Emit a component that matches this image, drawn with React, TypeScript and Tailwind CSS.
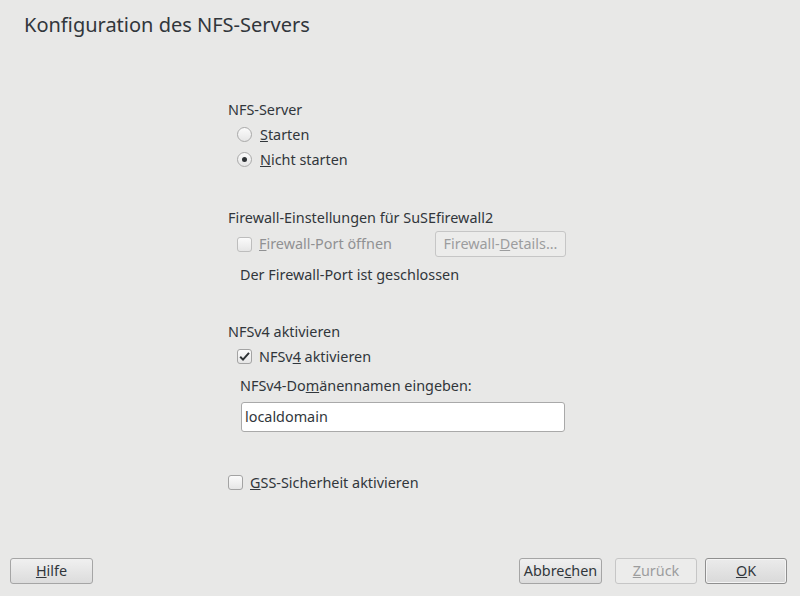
import type { ReactNode } from "react"

const font = { fontFamily: '"Noto Sans", "Open Sans", sans-serif' }

function Radio({ checked, children }: { checked?: boolean; children: ReactNode }) {
  return (
    <div className="flex h-[25px] items-center pl-[9px]">
      <span className="flex h-[15px] w-[15px] items-center justify-center rounded-full border border-[#a9a9a9] bg-gradient-to-b from-[#fbfbfb] to-[#e6e6e6]">
        {checked && <span className="h-[5px] w-[5px] rounded-full bg-[#2e3235]" />}
      </span>
      <span className="ml-[8px]">{children}</span>
    </div>
  )
}

function Check({ checked, disabled, children, indent = true }: { checked?: boolean; disabled?: boolean; children: ReactNode; indent?: boolean }) {
  return (
    <div className={"flex h-[25px] items-center " + (indent ? "pl-[9px]" : "pl-0")}>
      <span
        className={
          "flex h-[15px] w-[15px] items-center justify-center rounded-[3px] border bg-gradient-to-b from-[#fbfbfb] to-[#e6e6e6] " +
          (disabled ? "border-[#bdbdbd]" : "border-[#a3a3a3]")
        }
      >
        {checked && (
          <svg width="13" height="13" viewBox="0 0 13 13">
            <path d="M2.2 6.8 L5 9.6 L11 2.8" fill="none" stroke="#2e3235" strokeWidth="2" />
          </svg>
        )}
      </span>
      <span className={"ml-[7px] " + (disabled ? "text-[#909193]" : "")}>{children}</span>
    </div>
  )
}

function Btn({ children, disabled, def, w = "w-[83px]" }: { children: ReactNode; disabled?: boolean; def?: boolean; w?: string }) {
  return (
    <button
      className={
        "flex h-[26px] items-center justify-center rounded-[3px] border text-[14.4px] " +
        w +
        " " +
        (disabled
          ? "border-[#c6c6c6] bg-[#ececeb] text-[#9c9d9e]"
          : def
          ? "border-[#8f8f8f] bg-gradient-to-b from-[#ebebeb] to-[#d9d9d9] text-[#31363b] shadow-[inset_0_0_0_1px_#f4f4f4]"
          : "border-[#a5a5a5] bg-gradient-to-b from-[#f0f0f0] to-[#dcdcdc] text-[#31363b]")
      }
    >
      {children}
    </button>
  )
}

export default function App() {
  return (
    <div style={font} className="flex h-[596px] w-[800px] flex-col bg-[#e8e8e7] text-[14.4px] leading-[20px] text-[#31363b]">
      <h1 className="pl-[24px] pt-[12px] text-[20px] leading-[26px]">Konfiguration des NFS-Servers</h1>

      <div className="ml-[228px] mt-[62px] w-[338px] flex-1">
        <div className="h-[20px]">NFS-Server</div>
        <div className="mt-[2px]">
          <Radio>
            <u>S</u>tarten
          </Radio>
          <Radio checked>
            <u>N</u>icht starten
          </Radio>
        </div>

        <div className="mt-[36px] h-[20px]">Firewall-Einstellungen für SuSEfirewall2</div>
        <div className="mt-[3px] flex items-center justify-between">
          <Check disabled>
            <u>F</u>irewall-Port öffnen
          </Check>
          <Btn disabled w="w-[131px]">
            Firewall-<u>D</u>etails...
          </Btn>
        </div>
        <div className="mt-[8px] h-[20px] pl-[12px]">Der Firewall-Port ist geschlossen</div>

        <div className="mt-[37px] h-[20px]">NFSv4 aktivieren</div>
        <div className="mt-[2px]">
          <Check checked>
            NFSv<u>4</u> aktivieren
          </Check>
        </div>
        <div className="mt-[7px] h-[20px] pl-[12px]">
          NFSv4-Do<u>m</u>änennamen eingeben:
        </div>
        <div className="ml-[13px] mt-[6px] flex h-[30px] w-[324px] items-center rounded-[3px] border border-[#a9a9a9] bg-white pl-[3px]">
          localdomain
        </div>

        <div className="mt-[38px]">
          <Check indent={false}>
            <u>G</u>SS-Sicherheit aktivieren
          </Check>
        </div>
      </div>

      <div className="flex items-center pb-[12px] pl-[10px] pr-[13px]">
        <Btn>
          <u>H</u>ilfe
        </Btn>
        <div className="flex-1" />
        <Btn>
          Abbre<u>c</u>hen
        </Btn>
        <div className="w-[13px]" />
        <Btn disabled w="w-[82px]">
          <u>Z</u>urück
        </Btn>
        <div className="w-[8px]" />
        <Btn def w="w-[82px]">
          <u>O</u>K
        </Btn>
      </div>
    </div>
  )
}
